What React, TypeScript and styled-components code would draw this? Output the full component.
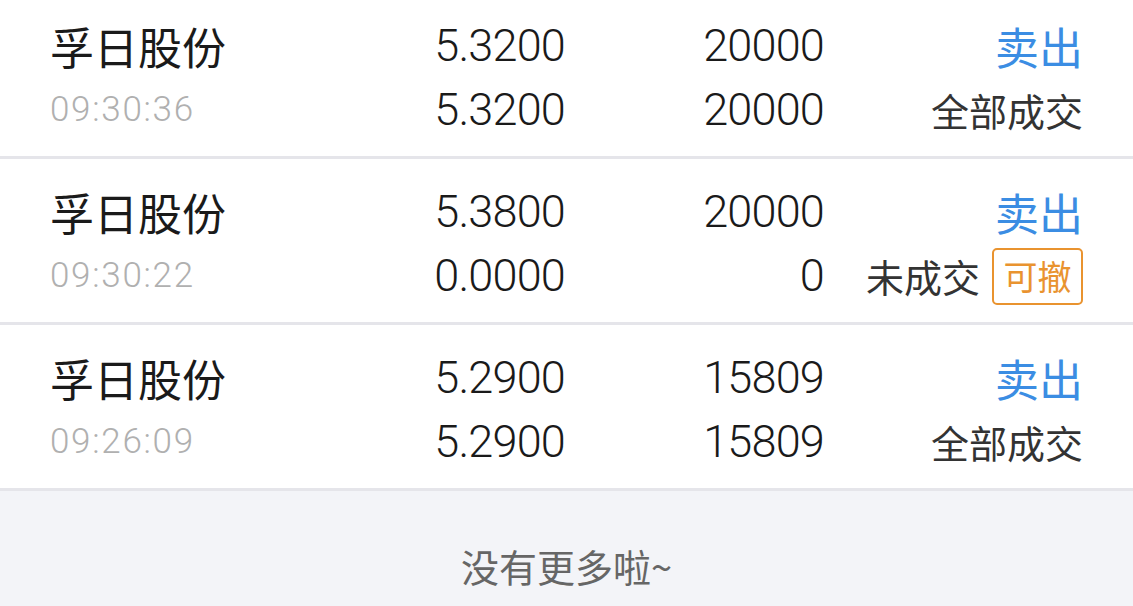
import React from 'react';
import styled, { createGlobalStyle } from 'styled-components';

const GlobalStyle = createGlobalStyle`
  html, body {
    margin: 0;
    padding: 0;
    background: #f3f4f8;
    overflow: hidden;
  }
  body {
    font-family: Roboto, "Noto Sans CJK SC", sans-serif;
  }
`;

const Page = styled.div`
  width: 1133px;
  height: 606px;
  overflow: hidden;
  background: #f3f4f8;
`;

const OrderList = styled.div`
  margin-top: -7px;
  display: flex;
  flex-direction: column;
`;

const OrderRow = styled.div`
  display: grid;
  grid-template-columns: 250px 265px 259px 1fr;
  grid-template-rows: 64px 64px;
  padding: 21px 50px 14px;
  height: 166px;
  box-sizing: border-box;
  background: #ffffff;
  border-bottom: 3px solid #e5e5ea;
`;

const Cell = styled.div<{ $align?: 'left' | 'right' }>`
  display: flex;
  align-items: center;
  justify-content: ${({ $align }) => ($align === 'right' ? 'flex-end' : 'flex-start')};
  line-height: 64px;
  white-space: nowrap;
`;

const StockName = styled(Cell)`
  font-family: "Noto Sans CJK SC", sans-serif;
  font-size: 44px;
  color: #1a1a1a;
`;

const Time = styled(Cell)`
  font-family: Roboto, sans-serif;
  font-weight: 300;
  font-size: 35px;
  letter-spacing: 1.7px;
  color: #b0b0b0;
`;

const Num = styled(Cell)`
  font-family: Roboto, sans-serif;
  font-weight: 300;
  font-size: 45px;
  letter-spacing: -0.8px;
  color: #1a1a1a;
`;

const Side = styled(Cell)`
  font-family: "Noto Sans CJK SC", sans-serif;
  font-size: 44px;
  color: #3b8de3;
`;

const Status = styled(Cell)`
  font-family: "Noto Sans CJK SC", sans-serif;
  font-size: 38px;
  color: #333333;
  gap: 12px;
`;

const CancelBadge = styled.span`
  display: inline-flex;
  align-items: center;
  justify-content: center;
  box-sizing: border-box;
  width: 91px;
  height: 57px;
  border: 2.5px solid #e9932f;
  border-radius: 5px;
  font-size: 34px;
  line-height: 1;
  color: #e9932f;
`;

const Footer = styled.div`
  padding: 43px 0 40px;
  text-align: center;
  font-family: "Noto Sans CJK SC", sans-serif;
  font-size: 38px;
  line-height: 64px;
  color: #666666;
`;

interface Order {
  name: string;
  time: string;
  price: string;
  dealPrice: string;
  qty: string;
  dealQty: string;
  side: string;
  status: string;
  cancelable?: boolean;
}

const orders: Order[] = [
  { name: '孚日股份', time: '09:30:36', price: '5.3200', dealPrice: '5.3200', qty: '20000', dealQty: '20000', side: '卖出', status: '全部成交' },
  { name: '孚日股份', time: '09:30:22', price: '5.3800', dealPrice: '0.0000', qty: '20000', dealQty: '0', side: '卖出', status: '未成交', cancelable: true },
  { name: '孚日股份', time: '09:26:09', price: '5.2900', dealPrice: '5.2900', qty: '15809', dealQty: '15809', side: '卖出', status: '全部成交' },
];

export default function App() {
  return (
    <Page>
      <GlobalStyle />
      <OrderList>
        {orders.map((o, i) => (
          <OrderRow key={i}>
            <StockName>{o.name}</StockName>
            <Num $align="right">{o.price}</Num>
            <Num $align="right">{o.qty}</Num>
            <Side $align="right">{o.side}</Side>
            <Time>{o.time}</Time>
            <Num $align="right">{o.dealPrice}</Num>
            <Num $align="right">{o.dealQty}</Num>
            <Status $align="right">
              {o.status}
              {o.cancelable && <CancelBadge>可撤</CancelBadge>}
            </Status>
          </OrderRow>
        ))}
      </OrderList>
      <Footer>没有更多啦~</Footer>
    </Page>
  );
}
